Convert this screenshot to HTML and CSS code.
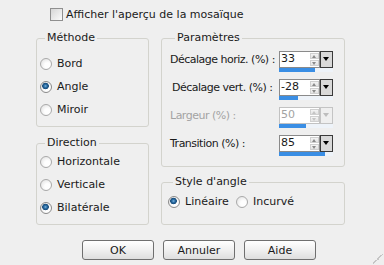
FILE: index.html
```html
<!DOCTYPE html>
<html lang="fr">
<head>
    <meta charset="UTF-8">
    <title>Mosaïque</title>
    <link rel="stylesheet" href="styles.css">
</head>
<body>
    <div class="check-row"><span class="checkbox"></span>Afficher l'aperçu de la mosaïque</div>

    <div class="main">
        <div class="col col-left">
            <fieldset class="group group-methode">
                <legend>Méthode</legend>
                <div class="radio-row"><span class="radio"></span>Bord</div>
                <div class="radio-row"><span class="radio checked"></span>Angle</div>
                <div class="radio-row"><span class="radio"></span>Miroir</div>
            </fieldset>
            <fieldset class="group group-direction">
                <legend>Direction</legend>
                <div class="radio-row"><span class="radio"></span>Horizontale</div>
                <div class="radio-row"><span class="radio"></span>Verticale</div>
                <div class="radio-row"><span class="radio checked"></span>Bilatérale</div>
            </fieldset>
        </div>

        <div class="col col-right">
            <fieldset class="group group-params">
                <legend>Paramètres</legend>
                <div class="param-row">
                    <span class="param-label">Décalage horiz. (%) :</span>
                    <div class="spin">
                        <div class="spin-top">
                            <div class="spin-box"><span class="spin-value">33</span><span class="spin-arrows"><span class="arr up"></span><span class="arr down"></span></span></div>
                            <span class="spin-drop"></span>
                        </div>
                        <div class="spin-bar"><span class="spin-fill" style="width: 66.5%"></span></div>
                    </div>
                </div>
                <div class="param-row">
                    <span class="param-label indent">Décalage vert. (%) :</span>
                    <div class="spin">
                        <div class="spin-top">
                            <div class="spin-box"><span class="spin-value">-28</span><span class="spin-arrows"><span class="arr up"></span><span class="arr down"></span></span></div>
                            <span class="spin-drop"></span>
                        </div>
                        <div class="spin-bar"><span class="spin-fill" style="width: 36%"></span></div>
                    </div>
                </div>
                <div class="param-row disabled">
                    <span class="param-label">Largeur (%) :</span>
                    <div class="spin">
                        <div class="spin-top">
                            <div class="spin-box"><span class="spin-value">50</span><span class="spin-arrows"><span class="arr up"></span><span class="arr down"></span></span></div>
                            <span class="spin-drop"></span>
                        </div>
                        <div class="spin-bar"><span class="spin-fill" style="width: 50%"></span></div>
                    </div>
                </div>
                <div class="param-row">
                    <span class="param-label">Transition (%) :</span>
                    <div class="spin">
                        <div class="spin-top">
                            <div class="spin-box"><span class="spin-value">85</span><span class="spin-arrows"><span class="arr up"></span><span class="arr down"></span></span></div>
                            <span class="spin-drop"></span>
                        </div>
                        <div class="spin-bar"><span class="spin-fill" style="width: 85%"></span></div>
                    </div>
                </div>
            </fieldset>
            <fieldset class="group group-style">
                <legend>Style d'angle</legend>
                <div class="radio-row style-item"><span class="radio checked"></span>Linéaire</div>
                <div class="radio-row"><span class="radio"></span>Incurvé</div>
            </fieldset>
        </div>
    </div>

    <div class="buttons">
        <button class="btn">OK</button>
        <button class="btn">Annuler</button>
        <button class="btn">Aide</button>
    </div>

    <span class="grip"></span>
</body>
</html>
```

FILE: styles.css
```css
* {
    box-sizing: border-box;
}

body {
    margin: 0;
    width: 384px;
    height: 265px;
    overflow: hidden;
    position: relative;
    background: #efefef;
    font-family: "DejaVu Sans", sans-serif;
    font-size: 11px;
    color: #1a1a1a;
    padding-top: 8px;
}

.check-row {
    display: flex;
    align-items: center;
    gap: 3px;
    margin-left: 50px;
    height: 13px;
    line-height: 13px;
}

.checkbox {
    width: 13px;
    height: 13px;
    border: 1px solid #8f8f8f;
    background: linear-gradient(135deg, #d6d6d6, #fbfbfb);
}

.main {
    display: flex;
    gap: 12px;
    margin: 10px 0 0 36px;
}

.col {
    display: flex;
    flex-direction: column;
}

.col-left {
    width: 113px;
}

.col-right {
    width: 184px;
}

.group {
    margin: 0;
    padding: 0;
    border: 1px solid #d3d3cd;
    border-radius: 3px;
}

.group legend {
    padding: 0 2px;
    margin-left: 5px;
    line-height: 14px;
}

.group-methode {
    height: 96px;
    padding: 7px 0 0 3px;
}

.group-direction {
    height: 89px;
    margin-top: 9px;
    padding: 0 0 0 3px;
}

.group-params {
    height: 136px;
    padding: 6px 0 0 8px;
}

.group-style {
    height: 50px;
    margin-top: 8px;
    padding: 1px 0 0 6px;
    display: flex;
}

.radio-row {
    display: flex;
    align-items: center;
    gap: 5px;
    height: 23px;
}

.style-item {
    width: 68px;
}

.radio {
    width: 12px;
    height: 12px;
    border-radius: 50%;
    border: 1px solid #a9a9a9;
    background: radial-gradient(circle at 65% 65%, #fefefe 30%, #dcdcdc 100%);
}

.radio.checked {
    border-color: #8a8a8a;
    background:
        radial-gradient(circle at 45% 40%, #7fb6e0 0, #2c6fa6 1.5px, #174a78 3px, transparent 3.6px),
        radial-gradient(circle at 65% 65%, #fefefe 30%, #dcdcdc 100%);
}

.param-row {
    display: flex;
    align-items: flex-start;
    height: 21px;
    margin-bottom: 7px;
}

.param-label {
    width: 109px;
    line-height: 17px;
    white-space: nowrap;
    letter-spacing: -0.5px;
}

.param-label.indent {
    padding-left: 2px;
}

.spin {
    width: 54px;
}

.spin-top {
    display: flex;
    height: 17px;
}

.spin-box {
    display: flex;
    width: 41px;
    border: 1px solid #8a8a8a;
    background: #fff;
}

.spin-value {
    flex: 1;
    padding-left: 1px;
    line-height: 14px;
}

.spin-arrows {
    width: 9px;
    display: flex;
    flex-direction: column;
    gap: 1px;
    padding: 1px 0 1px 0;
}

.arr {
    flex: 1;
    position: relative;
    background: linear-gradient(#f4f4f4, #e2e2e2);
    border: 1px solid #d0d0d0;
}

.arr::after {
    content: "";
    position: absolute;
    left: 1px;
    top: 1px;
    border-left: 2.5px solid transparent;
    border-right: 2.5px solid transparent;
}

.arr.up::after {
    border-bottom: 3px solid #8a8a8a;
}

.arr.down::after {
    border-top: 3px solid #8a8a8a;
}

.spin-drop {
    width: 13px;
    position: relative;
    border: 1px solid #3a3a3a;
    background: #d9d9d9;
}

.spin-drop::after {
    content: "";
    position: absolute;
    left: 2px;
    top: 5px;
    border-left: 3.5px solid transparent;
    border-right: 3.5px solid transparent;
    border-top: 4px solid #000;
}

.spin-bar {
    height: 4px;
    background: #eef3f9;
}

.spin-fill {
    display: block;
    height: 100%;
    background: #3a8ee4;
}

.disabled .param-label,
.disabled .spin-value {
    color: #a3a3a3;
}

.disabled .spin-box {
    border-color: #c2c2c2;
}

.disabled .arr.up::after {
    border-bottom-color: #c4c4c4;
}

.disabled .arr.down::after {
    border-top-color: #c4c4c4;
}

.disabled .spin-drop {
    border-color: #c4c4c4;
    background: #efefef;
}

.disabled .spin-drop::after {
    border-top-color: #bdbdbd;
}

.buttons {
    display: flex;
    gap: 9px;
    margin: 15px 0 0 82px;
}

.btn {
    width: 72px;
    height: 20px;
    padding: 0;
    border: 1px solid #6f6f6f;
    border-radius: 3px;
    background: linear-gradient(#ffffff, #f0f0f0 50%, #dedede);
    font: inherit;
    color: #1a1a1a;
}

.grip {
    position: absolute;
    right: 1px;
    bottom: 1px;
    width: 10px;
    height: 10px;
    background: linear-gradient(135deg, transparent 45%, #c6c6c6 45%, #c6c6c6 55%, transparent 55%);
}
```
